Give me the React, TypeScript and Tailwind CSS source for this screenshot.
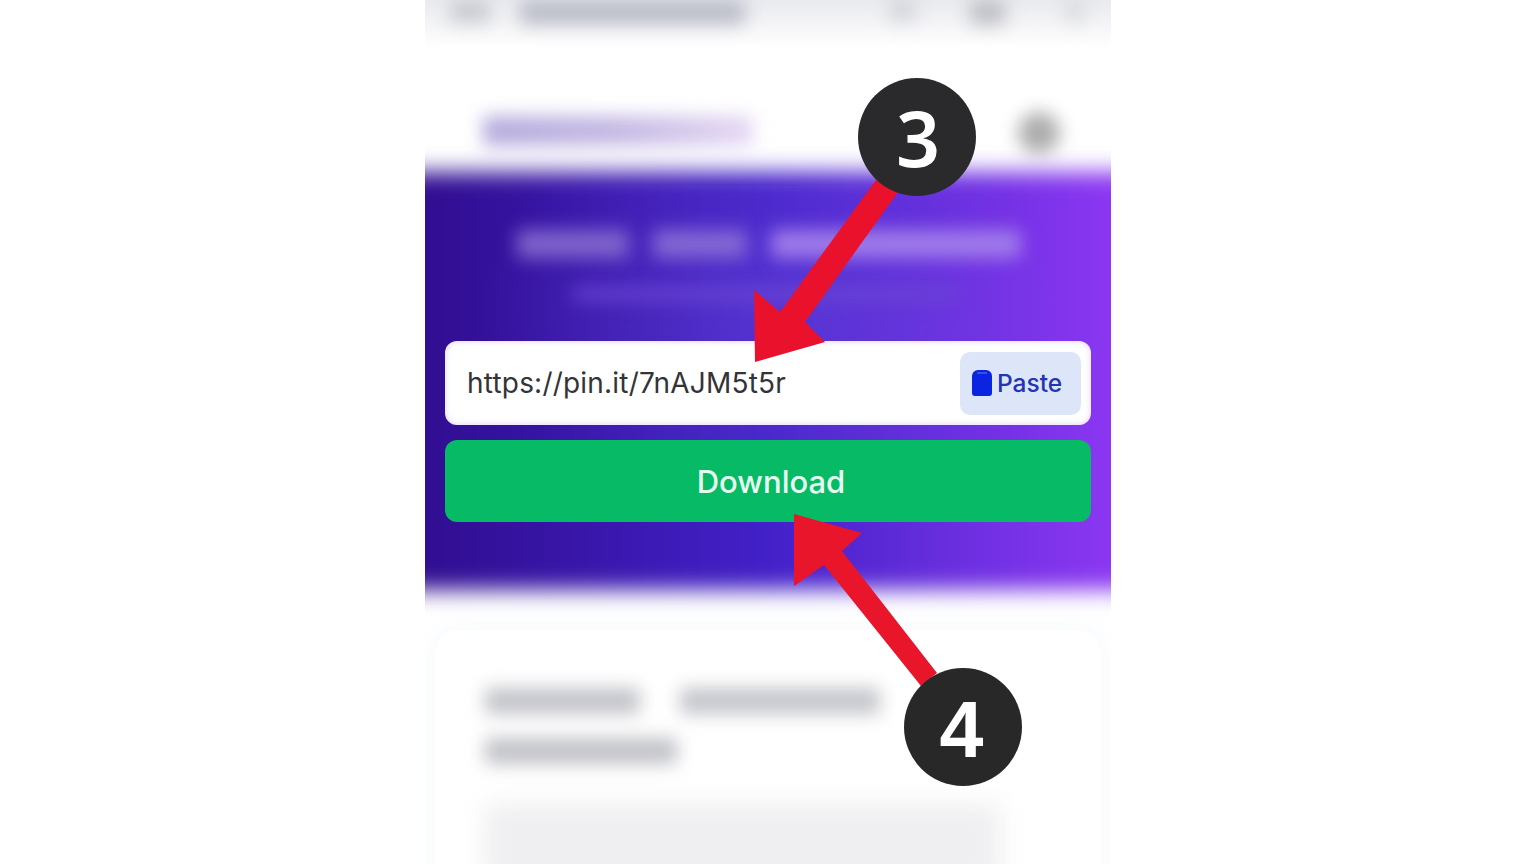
const blurBar = "rounded-sm blur-[9px]";

function TopBar() {
  return (
    <div className="flex h-[48px] items-start bg-gradient-to-b from-[#e9eaef] to-white pl-[25px]">
      <div className={`h-[22px] w-[40px] bg-[#c8c9d0] ${blurBar}`} />
      <div className={`ml-[30px] h-[24px] w-[225px] bg-[#b9bbc6] ${blurBar}`} />
      <div className={`ml-[145px] h-[20px] w-[25px] bg-[#d0d1d6] ${blurBar}`} />
      <div className={`ml-[55px] h-[24px] w-[35px] bg-[#bcbdc3] ${blurBar}`} />
      <div className={`ml-[60px] h-[20px] w-[20px] bg-[#d8d9dc] ${blurBar}`} />
    </div>
  );
}

function SiteHeader() {
  return (
    <div className="flex h-[124px] items-start bg-white pl-[58px] pt-[68px]">
      <div className={`h-[30px] w-[270px] bg-gradient-to-r from-[#b5abdc] via-[#c4b8e3] to-[#e6d8f4] ${blurBar}`} />
      <div className="ml-[265px] -mt-[4px] h-[42px] w-[42px] rounded-full bg-[#adadad] blur-[9px]" />
    </div>
  );
}

function Hero() {
  return (
    <section className="relative h-[418px] px-[20px]">
      <div className="absolute inset-x-[-30px] inset-y-0 bg-gradient-to-r from-[#2f0c8c] via-[#4220c8] to-[#9238f6] blur-[11px]" />
      <div className="absolute inset-x-[-30px] inset-y-[14px] bg-[radial-gradient(ellipse_at_50%_32%,rgba(130,100,235,0.3),transparent_55%)]" />
      <div className="relative">
        <div className="flex gap-[24px] pl-[72px] pt-[58px]">
          <div className="h-[28px] w-[112px] rounded bg-[#8064cc] blur-[9px]" />
          <div className="h-[28px] w-[94px] rounded bg-[#8468d4] blur-[9px]" />
          <div className="h-[28px] w-[250px] rounded bg-[#a07cea] blur-[9px]" />
        </div>
        <div className="ml-[128px] mt-[30px] h-[12px] w-[385px] rounded bg-[#6a44d4] blur-[9px]" />

        <div className="mt-[41px] flex h-[84px] items-center justify-between rounded-[12px] bg-white pl-[22px] pr-[10px] shadow-[inset_0_0_6px_rgba(150,120,230,0.35)]">
          <span className="font-['Inter',sans-serif] text-[28px] leading-none tracking-[0.2px] text-[#333338]">
            https://pin.it/7nAJM5t5r
          </span>
          <div className="flex h-[63px] w-[121px] items-center gap-[5px] rounded-[10px] bg-[#dde6f8] pl-[12px]">
            <svg viewBox="0 0 20 26" className="h-[26px] w-[20px]">
              <path d="M6 0h8a6 6 0 0 1 6 6v17a3 3 0 0 1-3 3H3a3 3 0 0 1-3-3V6a6 6 0 0 1 6-6z" fill="#0a24e2" />
              <path d="M5 3h10" stroke="#5a6ef0" strokeWidth="1.2" />
            </svg>
            <span className="font-['Inter',sans-serif] text-[24.5px] font-medium leading-none text-[#2334b4]">Paste</span>
          </div>
        </div>

        <button className="mt-[15px] flex h-[82px] w-full items-center justify-center rounded-[12px] bg-[#06ba66] pl-[6px] font-['Inter',sans-serif] text-[31px] font-medium leading-none text-[#e6fff0]">
          Download
        </button>
      </div>
    </section>
  );
}

function InfoCard() {
  return (
    <section className="px-[10px] pt-[40px]">
      <div className="h-[260px] rounded-t-[24px] bg-white pl-[50px] pt-[58px] shadow-[0_0_24px_rgba(180,210,230,0.16)]">
        <div className="flex gap-[40px]">
          <div className="h-[26px] w-[155px] rounded bg-[#c2c3c9] blur-[9px]" />
          <div className="h-[26px] w-[200px] rounded bg-[#c4c5cb] blur-[9px]" />
        </div>
        <div className="mt-[24px] h-[26px] w-[192px] rounded bg-[#c0c1c7] blur-[9px]" />
        <div className="mt-[40px] h-[80px] w-[515px] rounded bg-[#efeff1] blur-[12px]" />
      </div>
    </section>
  );
}

export default function App() {
  return (
    <main className="relative h-[864px] w-full overflow-hidden bg-white">
      <div className="mx-auto h-full w-[686px] overflow-hidden bg-white">
        <TopBar />
        <SiteHeader />
        <Hero />
        <InfoCard />
      </div>

      {/* step arrows */}
      <svg viewBox="0 0 1536 864" className="absolute inset-0 h-[864px] w-[1536px]">
        <path d="M876 180 L898 192 L805 322 L825 342 L755 362 L754 290 L780 312 Z" fill="#e9112c" />
        <path d="M794 514 L862 533 L842 551 L937 673 L921 686 L824 565 L794 586 Z" fill="#e9152b" />
      </svg>

      <div className="absolute left-[858px] top-[78px] flex h-[118px] w-[118px] items-center justify-center rounded-full bg-[#2a2a2c] pl-[2px] font-['Noto_Sans',sans-serif] text-[77px] font-semibold leading-none text-white">
        3
      </div>
      <div className="absolute left-[904px] top-[668px] flex h-[118px] w-[118px] items-center justify-center rounded-full bg-[#282828] pr-[3px] pt-[4px] font-['Liberation_Sans',sans-serif] text-[79px] font-bold leading-none text-white">
        4
      </div>
    </main>
  );
}
